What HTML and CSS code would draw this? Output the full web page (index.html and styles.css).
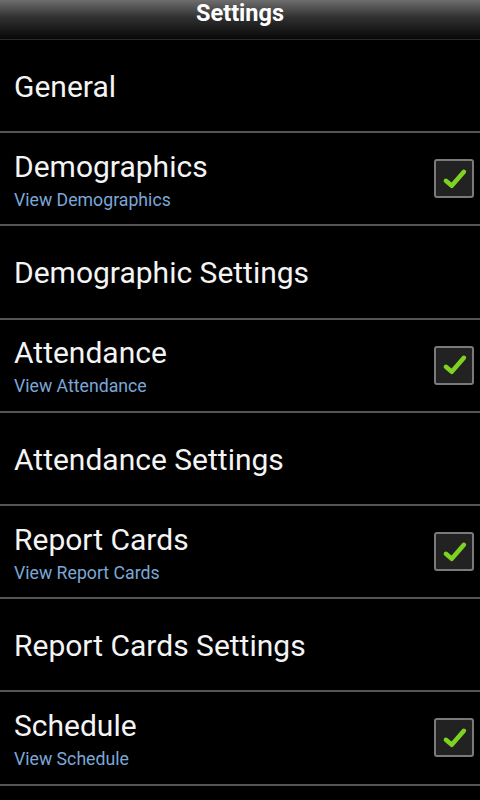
FILE: index.html
```html
<!DOCTYPE html>
<html>
<head>
<meta charset="utf-8">
<link rel="stylesheet" href="styles.css">
</head>
<body>
<header class="titlebar">Settings</header>
<ul class="prefs">
  <li class="pref"><div class="text"><div class="title">General</div></div></li>
  <li class="pref"><div class="text"><div class="title">Demographics</div><div class="summary">View Demographics</div></div><span class="check"><svg viewBox="0 0 40 40" width="40" height="40"><path d="M11 22 L17.5 27.5 L31 12" /></svg></span></li>
  <li class="pref"><div class="text"><div class="title">Demographic Settings</div></div></li>
  <li class="pref"><div class="text"><div class="title">Attendance</div><div class="summary">View Attendance</div></div><span class="check"><svg viewBox="0 0 40 40" width="40" height="40"><path d="M11 22 L17.5 27.5 L31 12" /></svg></span></li>
  <li class="pref"><div class="text"><div class="title">Attendance Settings</div></div></li>
  <li class="pref"><div class="text"><div class="title">Report Cards</div><div class="summary">View Report Cards</div></div><span class="check"><svg viewBox="0 0 40 40" width="40" height="40"><path d="M11 22 L17.5 27.5 L31 12" /></svg></span></li>
  <li class="pref"><div class="text"><div class="title">Report Cards Settings</div></div></li>
  <li class="pref"><div class="text"><div class="title">Schedule</div><div class="summary">View Schedule</div></div><span class="check"><svg viewBox="0 0 40 40" width="40" height="40"><path d="M11 22 L17.5 27.5 L31 12" /></svg></span></li>
</ul>
</body>
</html>
```
FILE: styles.css
```css
html, body {
  margin: 0;
  padding: 0;
  background: #000;
  width: 480px;
  height: 800px;
  overflow: hidden;
  font-family: Roboto, "Liberation Sans", sans-serif;
}
.titlebar {
  height: 39px;
  border-bottom: 1px solid #2a2a2a;
  background: linear-gradient(#6e6e6e 0%, #303030 45%, #080808 100%);
  color: #fff;
  font-weight: bold;
  font-size: 23.5px;
  line-height: 27px;
  text-align: center;
}
.prefs {
  list-style: none;
  margin: 0;
  padding: 0;
}
.pref {
  height: 91.2px;
  border-bottom: 2px solid #555;
  display: flex;
  align-items: center;
  padding: 0 6px 0 14px;
}
.text {
  flex: 1;
  padding-top: 3px;
}
.title {
  color: #f4f4f4;
  font-size: 30px;
  line-height: 34px;
}
.summary {
  color: #7ba7d8;
  font-size: 17.7px;
  line-height: 22px;
  margin-top: 5px;
}
.check {
  width: 36px;
  height: 35px;
  border: 2px solid #7a7a7a;
  border-radius: 3px;
  background: #222;
  display: flex;
  align-items: center;
  justify-content: center;
}
.check svg {
  width: 36px;
  height: 36px;
}
.check path {
  fill: none;
  stroke: #7ed321;
  stroke-width: 5;
  stroke-linecap: round;
  stroke-linejoin: round;
}
```
